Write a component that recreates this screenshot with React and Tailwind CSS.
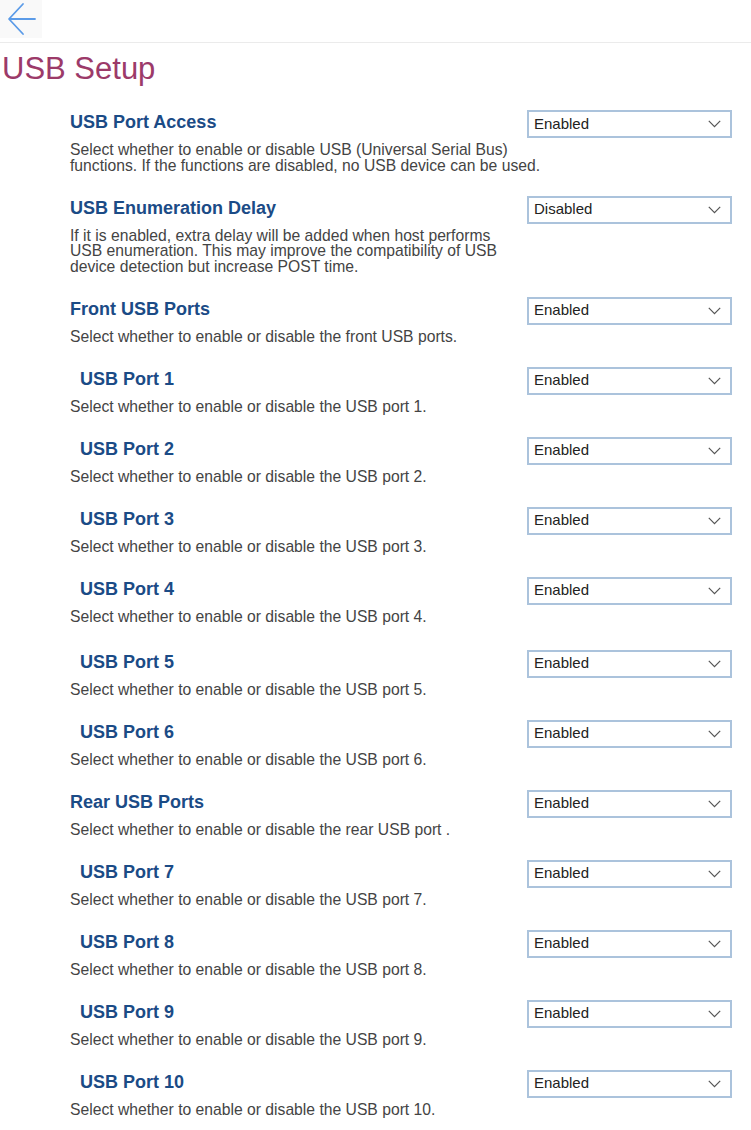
const rows = [
  {
    title: 'USB Port Access',
    value: 'Enabled',
    lines: [
      'Select whether to enable or disable USB (Universal Serial Bus)',
      'functions. If the functions are disabled, no USB device can be used.',
    ],
  },
  {
    title: 'USB Enumeration Delay',
    value: 'Disabled',
    lines: [
      'If it is enabled, extra delay will be added when host performs',
      'USB enumeration. This may improve the compatibility of USB',
      'device detection but increase POST time.',
    ],
  },
  {
    title: 'Front USB Ports',
    value: 'Enabled',
    lines: ['Select whether to enable or disable the front USB ports.'],
  },
  { title: 'USB Port 1', sub: true, value: 'Enabled', lines: ['Select whether to enable or disable the USB port 1.'] },
  { title: 'USB Port 2', sub: true, value: 'Enabled', lines: ['Select whether to enable or disable the USB port 2.'] },
  { title: 'USB Port 3', sub: true, value: 'Enabled', lines: ['Select whether to enable or disable the USB port 3.'] },
  { title: 'USB Port 4', sub: true, value: 'Enabled', lines: ['Select whether to enable or disable the USB port 4.'] },
  { title: 'USB Port 5', sub: true, value: 'Enabled', lines: ['Select whether to enable or disable the USB port 5.'], extra: true },
  { title: 'USB Port 6', sub: true, value: 'Enabled', lines: ['Select whether to enable or disable the USB port 6.'] },
  {
    title: 'Rear USB Ports',
    value: 'Enabled',
    lines: ['Select whether to enable or disable the rear USB port .'],
  },
  { title: 'USB Port 7', sub: true, value: 'Enabled', lines: ['Select whether to enable or disable the USB port 7.'] },
  { title: 'USB Port 8', sub: true, value: 'Enabled', lines: ['Select whether to enable or disable the USB port 8.'] },
  { title: 'USB Port 9', sub: true, value: 'Enabled', lines: ['Select whether to enable or disable the USB port 9.'] },
  { title: 'USB Port 10', sub: true, value: 'Enabled', lines: ['Select whether to enable or disable the USB port 10.'] },
]

function SelectBox({ value }) {
  return (
    <div className="mt-px flex h-[28px] w-[205px] shrink-0 items-center justify-between border-2 border-[#abc3dc] bg-white pl-[5px] pr-[9px] text-[15px] text-[#222]">
      <span>{value}</span>
      <svg width="13" height="8" viewBox="0 0 13 8" fill="none">
        <path d="M0.8 0.8 L6.5 6.6 L12.2 0.8" stroke="#555" strokeWidth="1.2" />
      </svg>
    </div>
  )
}

function SettingRow({ row }) {
  return (
    <div className={row.extra ? 'mt-[3px]' : ''}>
      <div className="flex items-start justify-between">
        <h3
          className={`text-[18px] font-bold leading-[26px] text-[#1b4b86] ${row.sub ? 'pl-[10px]' : ''}`}
        >
          {row.title}
        </h3>
        <SelectBox value={row.value} />
      </div>
      <p className="mt-[4px] text-[15.7px] leading-[15.5px] text-[#444]">
        {row.lines.map((line) => (
          <span key={line} className="block whitespace-nowrap">
            {line}
          </span>
        ))}
      </p>
    </div>
  )
}

export default function App() {
  return (
    <div className="min-h-[1130px] w-[751px] bg-white font-['Liberation_Sans',Arial,sans-serif]">
      <div className="h-[43px] border-b border-[#ebebeb]">
        <button type="button" className="flex h-[38px] w-[42px] items-center justify-center bg-[#f9f9f9]">
          <svg width="30" height="34" viewBox="0 0 30 34" fill="none">
            <path d="M29 17 H4 M17 2 L3 17 L17 32" stroke="#5b9be8" strokeWidth="1.8" strokeLinecap="round" strokeLinejoin="round" />
          </svg>
        </button>
      </div>
      <h1 className="mt-[8px] pl-[2px] text-[31px] leading-[36px] text-[#9c3a69]">USB Setup</h1>
      <div className="mt-[22px] flex flex-col gap-[21.5px] pl-[70px] pr-[19px]">
        {rows.map((row) => (
          <SettingRow key={row.title} row={row} />
        ))}
      </div>
    </div>
  )
}
